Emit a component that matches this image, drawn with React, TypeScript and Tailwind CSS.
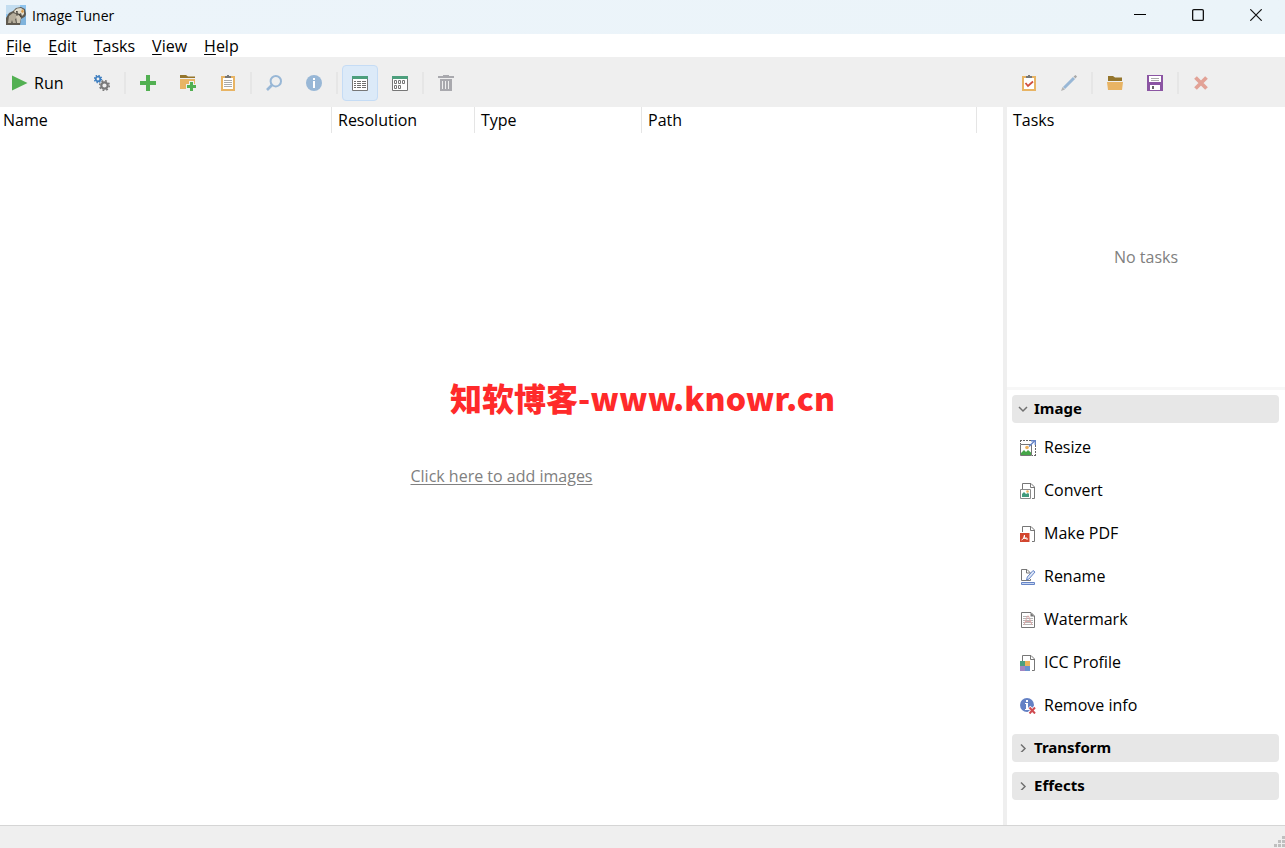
import { useState, type ReactNode } from "react";

function Icon({ children, className }: { children: ReactNode; className?: string }) {
  return (
    <svg viewBox="0 0 16 16" className={`size-4 shrink-0 ${className ?? ""}`} fill="none" aria-hidden="true">
      {children}
    </svg>
  );
}

function AppLogo() {
  return (
    <svg viewBox="0 0 20 20" className="size-5 shrink-0" aria-hidden="true">
      <rect width="20" height="20" fill="#8fc4ee" />
      <rect width="14" height="9" fill="#c3ddf0" />
      <path d="M0 20V13l3-5 4-2 3-3 5-1 4 2 1 5-1 4-1 4-3 3z" fill="#5f5a50" />
      <path d="M2 18l1-7 4-3 3 1 1 4-2 1 1 4H7l-1-3-1 3z" fill="#b5ad9b" />
      <path d="M8 6l3-2.500 4-.500 3 2v4l-2 2-1-3-2 1-2-2-2 1z" fill="#e2dccb" />
      <path d="M10 11l3-1 2 3-1 5h-3z" fill="#cfc7b5" />
      <path d="M16 4l2 2-1 2-2-1z" fill="#d89c4c" />
      <path d="M15 14l5-3v9h-6z" fill="#7fb3dc" />
      <path d="M10 6.500l2 .5M13 9l2 3" stroke="#3f3b34" />
    </svg>
  );
}

function PlayIcon() {
  return (
    <Icon>
      <path d="M0 .5L15.500 8 0 15.500z" fill="#52b052" />
    </Icon>
  );
}

function GearsIcon() {
  return (
    <Icon>
      <circle cx="4" cy="4" r="2.300" stroke="#3f7fc0" strokeWidth="1.800" />
      <circle cx="4" cy="4" r="3.500" stroke="#3f7fc0" strokeWidth="1.500" strokeDasharray="1.370 1.370" />
      <circle cx="10.500" cy="10.500" r="3.200" stroke="#7a7a7a" strokeWidth="2.200" />
      <circle cx="10.500" cy="10.500" r="4.800" stroke="#7a7a7a" strokeWidth="1.600" strokeDasharray="1.890 1.880" />
    </Icon>
  );
}

function PlusIcon() {
  return (
    <Icon>
      <path d="M6 0h4v6h6v4h-6v6H6v-6H0V6h6z" fill="#52b052" />
    </Icon>
  );
}

function FolderAddIcon() {
  return (
    <Icon>
      <path d="M0 0h6l2 1.500h7V3H0z" fill="#94752c" />
      <path d="M0 4h15v10H0z" fill="#e8b464" />
      <path d="M9 6h5v3h3v5h-3v3H9v-3H6V9h3z" fill="#efefef" />
      <path d="M10 7h3v3h3v3h-3v3h-3v-3H7v-3h3z" fill="#52b052" />
    </Icon>
  );
}

function ClipboardIcon({ checked }: { checked?: boolean }) {
  return (
    <Icon>
      <path d="M1 1h14v15H1z" fill="#e8b464" />
      <path d="M3 3h10v11H3z" fill="#fff" />
      <path d="M5 1h2V0h2v1h2v2H5z" fill="#777" />
      {checked ? (
        <path d="M4.500 8l2.500 3L12 6.500" stroke="#d0503f" strokeWidth="1.800" />
      ) : (
        <path d="M4 5.500h8M4 7.500h8M4 9.500h8M4 11.500h8" stroke="#aaa" />
      )}
    </Icon>
  );
}

function SearchIcon() {
  return (
    <Icon>
      <circle cx="9.800" cy="6.200" r="5.200" stroke="#98b7d6" strokeWidth="2" />
      <path d="M6.500 9.500L1 15" stroke="#98b7d6" strokeWidth="2.600" />
    </Icon>
  );
}

function InfoIcon() {
  return (
    <Icon>
      <circle cx="8" cy="8" r="8" fill="#98b7d6" />
      <path d="M7 3h2v2H7zM7 6h2v7H7z" fill="#fff" />
    </Icon>
  );
}

function ListViewIcon() {
  return (
    <Icon>
      <path d="M.5 2h15v13.500H.5z" fill="#fff" stroke="#777" />
      <path d="M0 1h16v3H0z" fill="#4d9f7d" />
      <path d="M2 6.500h12M2 8.500h12M2 10.500h12M2 12.500h12" stroke="#6e6e6e" strokeDasharray="2 1 4 1 4" />
    </Icon>
  );
}

function GridViewIcon() {
  return (
    <Icon>
      <path d="M.5 2h15v13.500H.5z" fill="#fff" stroke="#777" />
      <path d="M0 1h16v3H0z" fill="#4d9f7d" />
      <path d="M2.500 5.500h2v3h-2zM6.500 5.500h2v3h-2zM10.500 5.500h2v3h-2zM2.500 10.500h2v3h-2zM6.500 10.500h2v3h-2z" stroke="#777" />
    </Icon>
  );
}

function TrashIcon() {
  return (
    <Icon>
      <path d="M5 0h6v1h5v2H0V1h5zM2 4h12v12H2z" fill="#a9a9ae" />
      <path d="M4.500 6v8M7.500 6v8M10.500 6v8" stroke="#efefef" />
    </Icon>
  );
}

function PenIcon() {
  return (
    <Icon>
      <path d="M3 13L13 3" stroke="#98b7d6" strokeWidth="3" />
      <path d="M12.500 1.500l2-1.500L16 1.500l-1.500 2z" fill="#a8a8a8" />
      <path d="M0 16l1.500-4L4 14.500z" fill="#b4b4b4" />
    </Icon>
  );
}

function FolderIcon() {
  return (
    <Icon>
      <path d="M1 1h5l2 1.500h7V6H1z" fill="#94752c" />
      <path d="M0 7h16l-1 8H1z" fill="#e8b464" />
    </Icon>
  );
}

function SaveIcon() {
  return (
    <Icon>
      <path d="M0 0h16v16H0z" fill="#8b55a3" />
      <path d="M2 1h12v6H2zM3 10h10v5H3z" fill="#fff" />
      <path d="M4 3.500h8M4 5.500h8" stroke="#aaa" />
      <path d="M5 11h2v3H5z" fill="#666" />
    </Icon>
  );
}

function DeleteIcon() {
  return (
    <Icon>
      <path d="M2.500 2.500l11 11M13.500 2.500l-11 11" stroke="#e2a296" strokeWidth="3.800" />
    </Icon>
  );
}

function Page() {
  return (
    <>
      <path d="M2.500.5h8.500l3.500 3.500v11.500h-12z" fill="#fff" />
      <path d="M2.500 6V.5h8.500l3.500 3.500v11.500H12" stroke="#777" />
      <path d="M10.500.5V4.500h4" stroke="#777" />
    </>
  );
}

function ResizeIcon() {
  return (
    <Icon>
      <path d="M0 .5h11M15.500 5v11" stroke="#666" strokeDasharray="2 1" />
      <path d="M.5 1v3M12 15.500h4" stroke="#666" strokeDasharray="1 1" />
      <path d="M.5 4.500h11v11H.5z" fill="#fff" stroke="#777" />
      <path d="M1 13l3-3 2 2 2-2 3 2.500V15H1z" fill="#45a648" />
      <circle cx="7" cy="7.500" r="1.800" fill="#efb25d" />
      <path d="M9 6.500L14.500 1" stroke="#6685c8" strokeWidth="1.400" />
      <path d="M11 .7h4.300V5" stroke="#6685c8" strokeWidth="1.400" />
    </Icon>
  );
}

function ConvertIcon() {
  return (
    <Icon>
      <Page />
      <path d="M.5 6.500h10v9H.5z" fill="#fff" stroke="#8a8a8a" />
      <path d="M2 11l2-2 2 2 2-1 1 1v3H2z" fill="#439b7c" />
      <circle cx="7.500" cy="8.500" r="1.300" fill="#efb25d" />
    </Icon>
  );
}

function PdfIcon() {
  return (
    <Icon>
      <Page />
      <path d="M0 7h9.500v9H0z" fill="#d2462f" />
      <path d="M1.500 14l2-1.500L4.500 9v2.500l2 1.500H8M3 12.500l4-.5" stroke="#fff" />
    </Icon>
  );
}

function RenameIcon() {
  return (
    <Icon>
      <path d="M10.500 6V4L7 .5H1.500v11h9V10" fill="#fff" stroke="#777" />
      <path d="M6.500.5V4H10" stroke="#777" />
      <path d="M6.500 11l.8-3L13 1.500l2 1.500-6 7z" fill="#dce6f6" stroke="#6685c8" />
      <path d="M1.500 13.500h13v2h-13z" fill="#c8d7f0" stroke="#6685c8" />
    </Icon>
  );
}

function WatermarkIcon() {
  return (
    <Icon>
      <path d="M1.500.5H11l3.500 3.500v11.500h-13z" fill="#fff" stroke="#777" />
      <path d="M3 4.500h6M3 6.500h10M3 8.500h10M3 10.500h10M3 12.500h10" stroke="#b5b5b5" />
      <path d="M4 13L7.500 4h1L12 13M5.500 9.500h5" stroke="#dba9a9" />
      <path d="M10.500.5V4.500h4z" fill="#777" />
    </Icon>
  );
}

function IccIcon() {
  return (
    <Icon>
      <Page />
      <path d="M0 6h5v5H0z" fill="#4c9f80" />
      <path d="M5 6h5v5H5z" fill="#edb35c" />
      <path d="M0 11h5v5H0z" fill="#a385c2" />
      <path d="M5 11h5v5H5z" fill="#6992cf" />
    </Icon>
  );
}

function RemoveInfoIcon() {
  return (
    <Icon>
      <circle cx="7" cy="7" r="7" fill="#6481c4" />
      <path d="M6 2h2v2H6zM5 5h3v6h1v1H5v-1h1V6H5z" fill="#fff" />
      <path d="M9 9l6.500 6.500M15.500 9L9 15.500" stroke="#fff" strokeWidth="3.600" />
      <path d="M9.500 9.500l5.500 6M15 9.500l-5.500 6" stroke="#d04a50" strokeWidth="2" />
    </Icon>
  );
}

const menus = ["File", "Edit", "Tasks", "View", "Help"];

const imageTasks = [
  { label: "Resize", icon: <ResizeIcon /> },
  { label: "Convert", icon: <ConvertIcon /> },
  { label: "Make PDF", icon: <PdfIcon /> },
  { label: "Rename", icon: <RenameIcon /> },
  { label: "Watermark", icon: <WatermarkIcon /> },
  { label: "ICC Profile", icon: <IccIcon /> },
  { label: "Remove info", icon: <RemoveInfoIcon /> },
];

function ToolButton({
  label,
  active,
  onClick,
  children,
}: {
  label: string;
  active?: boolean;
  onClick?: () => void;
  children: ReactNode;
}) {
  return (
    <button
      type="button"
      aria-label={label}
      onClick={onClick}
      className={`flex size-9 shrink-0 items-center justify-center rounded border ${
        active ? "border-[#c5dcf5] bg-[#dceaf8]" : "border-transparent"
      }`}
    >
      {children}
    </button>
  );
}

function Separator() {
  return <div className="h-[22px] w-0.5 shrink-0 bg-[#e6e6e6]" />;
}

function Section({ title, open, onToggle, children }: { title: string; open: boolean; onToggle: () => void; children?: ReactNode }) {
  return (
    <section>
      <button
        type="button"
        aria-expanded={open}
        onClick={onToggle}
        className="flex h-7 w-full items-center gap-1.5 rounded bg-[#e7e7e7] pb-0.5 pl-1.5 font-['Noto_Sans',sans-serif] text-[15px] font-bold"
      >
        <svg viewBox="0 0 10 10" className="size-2.5" fill="none" stroke="#707070" strokeWidth="1.500" aria-hidden="true">
          {open ? <path d="M1 4l4 4 4-4" /> : <path d="M3 2.500l4 4-4 4" />}
        </svg>
        {title}
      </button>
      {open && children}
    </section>
  );
}

export default function App() {
  const [view, setView] = useState("list");
  const [openSection, setOpenSection] = useState("Image");

  const toggle = (name: string) => setOpenSection(openSection === name ? "" : name);

  return (
    <div className="relative flex h-screen flex-col overflow-hidden bg-white font-['Open_Sans','Noto_Sans_CJK_SC',sans-serif] text-base leading-5 text-black">
      <header className="flex h-[34px] shrink-0 bg-gradient-to-r from-[#ecf4fa] to-[#ebf4f9]">
        <div className="flex flex-1 items-center gap-1.5 pb-1 pl-1.5">
          <AppLogo />
          <h1 className="pt-0.5 text-sm">Image Tuner</h1>
        </div>
        <div className="flex pb-1">
          <button type="button" aria-label="Minimize" className="flex w-[58px] items-center justify-center">
            <svg viewBox="0 0 12 12" className="size-3" stroke="#000" aria-hidden="true">
              <path d="M0 5.500h12" />
            </svg>
          </button>
          <button type="button" aria-label="Maximize" className="flex w-[58px] items-center justify-center">
            <svg viewBox="0 0 12 12" className="size-3" fill="none" stroke="#111" strokeWidth="1.300" aria-hidden="true">
              <rect x=".65" y=".65" width="10.700" height="10.700" rx="1.200" />
            </svg>
          </button>
          <button type="button" aria-label="Close" className="flex w-[58px] items-center justify-center">
            <svg viewBox="0 0 12 12" className="size-3" stroke="#111" strokeWidth="1.200" aria-hidden="true">
              <path d="M.3.3l11.400 11.400M11.700.3L.3 11.700" />
            </svg>
          </button>
        </div>
      </header>

      <nav className="flex h-[23px] shrink-0 items-center gap-[17px] px-1.5 pt-px">
        {menus.map((name) => (
          <button key={name} type="button">
            <span className="underline underline-offset-2">{name[0]}</span>
            {name.slice(1)}
          </button>
        ))}
      </nav>

      <div className="flex h-[50px] shrink-0 items-center bg-[#efefef] pt-0.5">
        <div className="flex flex-1 items-center gap-1 pl-1.5">
          <button type="button" className="flex h-9 w-[74px] items-center gap-1.5 pl-1.5">
            <PlayIcon />
            Run
          </button>
          <ToolButton label="Settings"><GearsIcon /></ToolButton>
          <Separator />
          <ToolButton label="Add images"><PlusIcon /></ToolButton>
          <ToolButton label="Add folder"><FolderAddIcon /></ToolButton>
          <ToolButton label="Paste"><ClipboardIcon /></ToolButton>
          <Separator />
          <ToolButton label="Preview"><SearchIcon /></ToolButton>
          <ToolButton label="Information"><InfoIcon /></ToolButton>
          <Separator />
          <ToolButton label="List view" active={view === "list"} onClick={() => setView("list")}>
            <ListViewIcon />
          </ToolButton>
          <ToolButton label="Thumbnails" active={view === "grid"} onClick={() => setView("grid")}>
            <GridViewIcon />
          </ToolButton>
          <Separator />
          <ToolButton label="Remove images"><TrashIcon /></ToolButton>
        </div>
        <div className="flex w-[278px] shrink-0 items-center gap-1 pl-1">
          <ToolButton label="Add task"><ClipboardIcon checked /></ToolButton>
          <ToolButton label="Edit task"><PenIcon /></ToolButton>
          <Separator />
          <ToolButton label="Open tasks"><FolderIcon /></ToolButton>
          <ToolButton label="Save tasks"><SaveIcon /></ToolButton>
          <Separator />
          <ToolButton label="Delete task"><DeleteIcon /></ToolButton>
        </div>
      </div>

      <main className="flex min-h-0 flex-1">
        <div className="flex min-w-0 flex-1 flex-col">
          <table className="w-full table-fixed border-separate border-spacing-0 text-left">
            <thead>
              <tr className="h-[26px]">
                <th className="w-[332px] border-r border-[#e5e5e5] pl-[3px] font-normal">Name</th>
                <th className="w-[143px] border-r border-[#e5e5e5] pl-1.5 font-normal">Resolution</th>
                <th className="w-[167px] border-r border-[#e5e5e5] pl-1.5 font-normal">Type</th>
                <th className="w-[335px] border-r border-[#e5e5e5] pl-1.5 font-normal">Path</th>
                <td />
              </tr>
            </thead>
          </table>
          <div className="flex flex-1 items-center justify-center pb-1.5">
            <a href="#add" className="text-[#808080] underline underline-offset-2">Click here to add images</a>
          </div>
        </div>

        <aside className="flex w-[282px] shrink-0 flex-col border-l-4 border-[#efefef]">
          <div className="flex h-[280px] shrink-0 flex-col">
            <h2 className="pt-[3px] pl-1.5">Tasks</h2>
            <p className="flex flex-1 items-center justify-center pb-1 text-[#808080]">No tasks</p>
          </div>
          <div className="h-[3px] shrink-0 bg-[#f7f7f7]" />
          <div className="flex flex-col gap-2.5 overflow-hidden pt-[5px] pr-1.5 pl-[5px]">
            <Section title="Image" open={openSection === "Image"} onToggle={() => toggle("Image")}>
              <ul className="-mb-[3px] pt-[3px]">
                {imageTasks.map((task) => (
                  <li key={task.label}>
                    <button type="button" className="flex h-[43px] w-full items-center gap-2 pl-2">
                      {task.icon}
                      <span className="pb-0.5">{task.label}</span>
                    </button>
                  </li>
                ))}
              </ul>
            </Section>
            <Section title="Transform" open={openSection === "Transform"} onToggle={() => toggle("Transform")} />
            <Section title="Effects" open={openSection === "Effects"} onToggle={() => toggle("Effects")} />
          </div>
        </aside>
      </main>

      <footer className="flex h-[23px] shrink-0 items-end justify-end border-t border-[#d5d5d5] bg-[#efefef]">
        <svg viewBox="0 0 12 12" className="size-3" fill="#bfbfbf" aria-hidden="true">
          <path d="M9 0h3v3H9zM5 4h3v3H5zM9 4h3v3H9zM1 8h3v3H1zM5 8h3v3H5zM9 8h3v3H9z" />
        </svg>
      </footer>

      <p className="pointer-events-none absolute inset-x-0 top-[377px] text-center font-['Noto_Sans_CJK_SC',sans-serif] text-[32px] leading-10 font-black text-[#ff2a2a]">
        知软博客-www.knowr.cn
      </p>
    </div>
  );
}
